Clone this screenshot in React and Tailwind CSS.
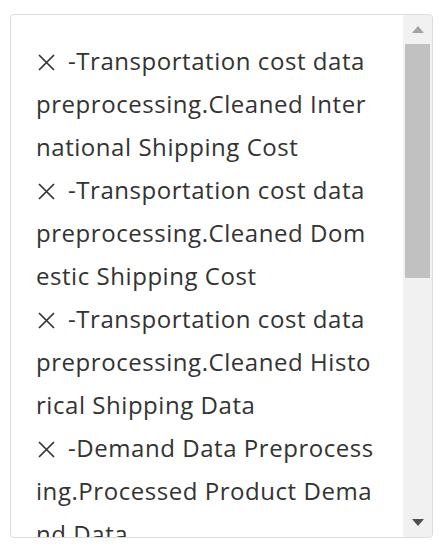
import React from "react";

const items = [
  ["-Transportation cost data", "preprocessing.Cleaned Inter", "national Shipping Cost"],
  ["-Transportation cost data", "preprocessing.Cleaned Dom", "estic Shipping Cost"],
  ["-Transportation cost data", "preprocessing.Cleaned Histo", "rical Shipping Data"],
  ["-Demand Data Preprocess", "ing.Processed Product Dema", "nd Data"],
];

function XIcon() {
  return (
    <svg width="19" height="19" viewBox="0 0 19 19" className="inline-block align-[-2px] ml-[1px] mr-[12px]">
      <path d="M2 2 L17 17 M17 2 L2 17" stroke="#333" strokeWidth="1.7" fill="none" />
    </svg>
  );
}

export default function App() {
  return (
    <div className="bg-white w-[440px] h-[547px] pt-[14px] pl-[10px]">
      <div className="flex w-[423px] h-[524px] border border-[#dcdcdc] rounded-[4px] overflow-hidden">
        <div
          className="flex-1 overflow-hidden pl-[25px] pt-[24px] text-[24px] leading-[43px] tracking-[0.55px] text-[#333] whitespace-nowrap"
          style={{ fontFamily: '"Open Sans", sans-serif' }}
        >
          {items.map((lines, i) => (
            <div key={i}>
              <div>
                <XIcon />
                {lines[0]}
              </div>
              {lines.slice(1).map((l) => (
                <div key={l}>{l}</div>
              ))}
            </div>
          ))}
        </div>
        <div className="w-[29px] bg-[#f1f1f1] flex flex-col">
          <div className="h-[29px] flex items-center justify-center">
            <svg width="12" height="7" viewBox="0 0 12 7">
              <path d="M0 7 L6 0 L12 7 Z" fill="#a3a3a3" />
            </svg>
          </div>
          <div className="h-[234px] mx-[2px] bg-[#c1c1c1]" />
          <div className="flex-1" />
          <div className="h-[29px] flex items-center justify-center">
            <svg width="12" height="7" viewBox="0 0 12 7">
              <path d="M0 0 L12 0 L6 7 Z" fill="#505050" />
            </svg>
          </div>
        </div>
      </div>
    </div>
  );
}
